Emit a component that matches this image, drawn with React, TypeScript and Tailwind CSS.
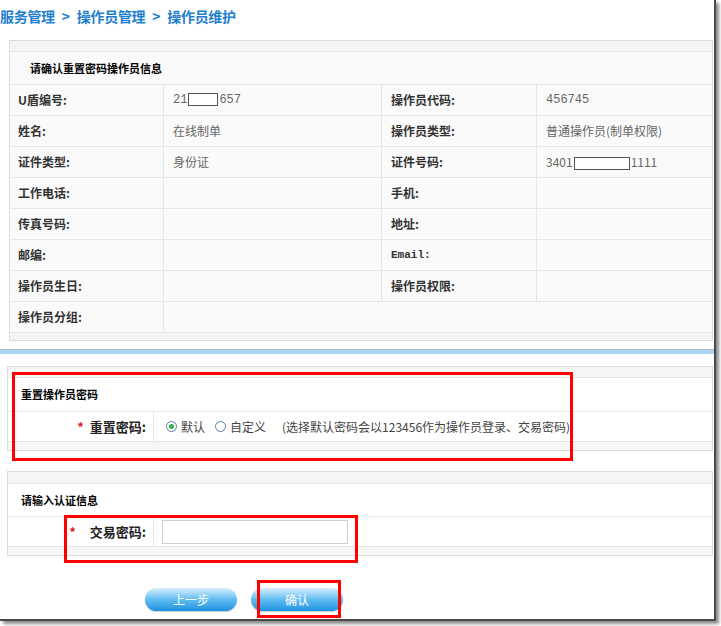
import React from 'react';

const font = { fontFamily: '"Noto Sans CJK SC", "Liberation Sans", sans-serif' };

type Row = { l1: string; v1?: React.ReactNode; l2?: string; v2?: React.ReactNode };

const Masked = ({ w }: { w: number }) => (
  <span className="mx-[1px] inline-block h-[13px] border border-[#555] bg-white align-middle" style={{ width: w }} />
);

const rows: Row[] = [
  { l1: 'U盾编号:', v1: <span className="font-['Liberation_Mono']">21<Masked w={30} />657</span>, l2: '操作员代码:', v2: <span className="font-['Liberation_Mono']">456745</span> },
  { l1: '姓名:', v1: '在线制单', l2: '操作员类型:', v2: '普通操作员(制单权限)' },
  { l1: '证件类型:', v1: '身份证', l2: '证件号码:', v2: <span>3401<Masked w={56} />1111</span> },
  { l1: '工作电话:', l2: '手机:' },
  { l1: '传真号码:', l2: '地址:' },
  { l1: '邮编:', l2: 'Email:' },
  { l1: '操作员生日:', l2: '操作员权限:' },
];

const Radio = ({ checked }: { checked?: boolean }) => (
  <span className="inline-flex h-[11px] w-[11px] items-center justify-center rounded-full border border-[#5b7fa6] bg-white">
    {checked && <span className="h-[5px] w-[5px] rounded-full bg-[#2fb34a]" />}
  </span>
);

const Button = ({ children }: { children: React.ReactNode }) => (
  <button className="h-[23px] w-[92px] rounded-full bg-gradient-to-b from-[#d6f0fd] via-[#5fbdf1] to-[#1692e0] text-[12px] text-white shadow-[0_1px_1px_rgba(0,0,0,0.2)]">
    {children}
  </button>
);

export default function App() {
  return (
    <div className="relative h-[626px] w-[721px] overflow-hidden bg-white text-[12px]" style={font}>
      <div className="relative h-[621px] w-[716px] border-b-[2px] border-r-[2px] border-[#4a4a4a] bg-white shadow-[3px_3px_3px_rgba(0,0,0,0.45)]">
        {/* breadcrumb */}
        <div className="flex h-[40px] items-start gap-[7px] pt-[6px] text-[14px] font-bold tracking-[-0.3px] text-[#1f7fcf]">
          <span>服务管理</span>
          <span>&gt;</span>
          <span>操作员管理</span>
          <span>&gt;</span>
          <span>操作员维护</span>
        </div>

        {/* operator info */}
        <div className="ml-[9px] w-[704px] border border-[#dcdcdc] bg-[#fafafa]">
          <div className="h-[11px] border-b border-[#e6e6e6] bg-[#f4f4f4]" />
          <div className="flex h-[32px] items-center pl-[20px] text-[11px] font-bold text-black">请确认重置密码操作员信息</div>
          <div className="grid grid-cols-[154px_218px_155px_175px] border-t border-[#e6e6e6]">
            {rows.map((r, i) => (
              <React.Fragment key={i}>
                <div className="flex h-[31px] items-center border-b border-r border-[#e6e6e6] pl-[8px] font-bold text-[#333]">{r.l1}</div>
                <div className="flex h-[31px] items-center border-b border-r border-[#e6e6e6] pl-[9px] text-[#666]">{r.v1}</div>
                <div className={`flex h-[31px] items-center border-b border-r border-[#e6e6e6] pl-[9px] font-bold text-[#333] ${r.l2 === 'Email:' ? "font-['Liberation_Mono'] text-[11px]" : ''}`}>{r.l2}</div>
                <div className="flex h-[31px] items-center border-b border-[#e6e6e6] pl-[9px] text-[#666]">{r.v2}</div>
              </React.Fragment>
            ))}
            <div className="flex h-[31px] items-center border-b border-r border-[#e6e6e6] pl-[8px] font-bold text-[#333]">操作员分组:</div>
            <div className="col-span-3 h-[31px] border-b border-[#e6e6e6]" />
          </div>
          <div className="h-[7px] bg-[#f4f4f4]" />
        </div>

        {/* separator */}
        <div className="mt-[8px] w-[714px] border-t border-[#b8b8b8]" />
        <div className="h-[4px] w-[714px] bg-[#a9d6f2]" />

        {/* reset password */}
        <div className="ml-[7px] mt-[12px] w-[706px] border border-[#dcdcdc] bg-white">
          <div className="h-[11px] border-b border-[#e6e6e6] bg-[#f6f6f6]" />
          <div className="flex h-[33px] items-center pl-[13px] text-[11px] font-bold text-black">重置操作员密码</div>
          <div className="flex h-[31px] border-y border-[#e6e6e6]">
            <div className="flex w-[146px] items-center justify-end border-r border-[#e6e6e6] pr-[7px] text-[13px] font-bold text-[#222]">
              <span className="mr-[6px] text-[#e02020]">*</span>重置密码:
            </div>
            <div className="flex items-center pl-[12px] text-[12px] text-[#444]">
              <Radio checked />
              <span className="ml-[4px]">默认</span>
              <span className="ml-[10px]"><Radio /></span>
              <span className="ml-[4px]">自定义</span>
              <span className="ml-[16px]">(选择默认密码会以123456作为操作员登录、交易密码)</span>
            </div>
          </div>
          <div className="h-[8px] bg-[#f6f6f6]" />
        </div>

        {/* auth info */}
        <div className="ml-[7px] mt-[20px] w-[706px] border border-[#dcdcdc] bg-white">
          <div className="h-[12px] border-b border-[#e6e6e6] bg-[#f6f6f6]" />
          <div className="flex h-[32px] items-center pl-[13px] text-[11px] font-bold text-black">请输入认证信息</div>
          <div className="flex h-[31px] border-y border-[#e6e6e6]">
            <div className="flex w-[146px] items-center justify-end border-r border-[#e6e6e6] pr-[7px] text-[13px] font-bold text-[#222]">
              <span className="mr-[14px] text-[#e02020]">*</span>交易密码:
            </div>
            <div className="flex items-center pl-[8px]">
              <input type="password" className="h-[24px] w-[186px] border border-[#cfcfcf] bg-white outline-none" />
            </div>
          </div>
          <div className="h-[8px] bg-[#f6f6f6]" />
        </div>

        {/* buttons */}
        <div className="ml-[145px] mt-[32px] flex gap-[14px]">
          <Button>上一步</Button>
          <Button>确认</Button>
        </div>

        {/* highlight boxes */}
        <div className="absolute left-[12px] top-[372px] h-[89px] w-[561px] border-[3px] border-[#ff0000]" />
        <div className="absolute left-[64px] top-[515px] h-[48px] w-[294px] border-[3px] border-[#ff0000]" />
        <div className="absolute left-[257px] top-[580px] h-[38px] w-[84px] border-[3px] border-[#ff0000]" />
      </div>
    </div>
  );
}
